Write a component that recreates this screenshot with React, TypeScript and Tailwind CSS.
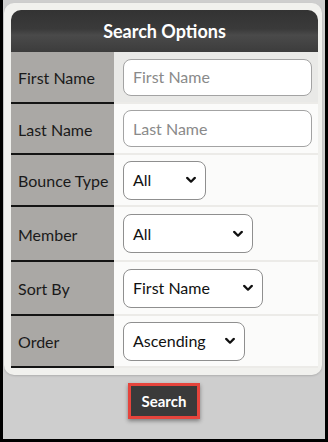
import React from "react";

const Chevron = () => (
  <svg
    className="pointer-events-none absolute right-[10px] top-1/2 -translate-y-1/2"
    width="10"
    height="7"
    viewBox="0 0 10 7"
  >
    <path d="M1.2 1.4 L5 5.2 L8.8 1.4" fill="none" stroke="#111" strokeWidth="2.2" strokeLinecap="round" strokeLinejoin="round" />
  </svg>
);

function Select({ value, width }: { value: string; width: number }) {
  return (
    <div className="relative" style={{ width }}>
      <div className="h-[39px] w-full rounded-[8px] border border-[#8f8f8f] bg-white pl-[9px] flex items-center text-[16px] text-[#111]">
        {value}
      </div>
      <Chevron />
    </div>
  );
}

function Input({ placeholder }: { placeholder: string }) {
  return (
    <div className="h-[37px] w-[189px] rounded-[8px] border border-[#a3a3a3] bg-white pl-[9px] flex items-center text-[16px] text-[#8a8a8a]">
      {placeholder}
    </div>
  );
}

function Row({
  label,
  h,
  children,
  shaded,
}: {
  label: string;
  h: number;
  children: React.ReactNode;
  shaded?: boolean;
}) {
  return (
    <div className="flex" style={{ height: h }}>
      <div className="w-[103px] bg-[#aaa8a5] border-b-2 border-[#141414] flex items-center pl-[7px] pt-[2px] text-[16px] text-[#1a1a1a]">
        {label}
      </div>
      <div
        className={
          "flex-1 flex items-center pl-[9px] border-b-2 border-[#ecebe8] " +
          (shaded ? "bg-[#e9e9e7]" : "bg-[#fbfbfa]")
        }
      >
        {children}
      </div>
    </div>
  );
}

export default function App() {
  return (
    <div
      className="w-[328px] h-[442px] bg-black px-[3px] pb-[3px]"
      style={{ fontFamily: "Lato, 'Open Sans', sans-serif" }}
    >
      <div className="h-full w-full bg-[#cecece] flex flex-col pt-[3px]">
        <div className="ml-[1px] mr-[3px] rounded-[10px] bg-[#f1f1ee] pl-[7px] pr-[4px] pt-[7px] pb-[7px] shadow-[0_1px_2px_rgba(0,0,0,0.15)]">
          <div className="h-[42px] rounded-t-[10px] bg-[linear-gradient(to_bottom,#333333_0%,#3a3a3a_45%,#4a4a4a_60%,#3c3c3c_100%)] flex items-center justify-center text-white font-bold text-[18px]">
            Search Options
          </div>
          <Row label="First Name" h={52} shaded>
            <Input placeholder="First Name" />
          </Row>
          <Row label="Last Name" h={51}>
            <Input placeholder="Last Name" />
          </Row>
          <Row label="Bounce Type" h={52}>
            <Select value="All" width={83} />
          </Row>
          <Row label="Member" h={55}>
            <Select value="All" width={130} />
          </Row>
          <Row label="Sort By" h={54}>
            <Select value="First Name" width={140} />
          </Row>
          <Row label="Order" h={52}>
            <Select value="Ascending" width={122} />
          </Row>
        </div>
        <div className="flex justify-center pt-[8px]">
          <div className="w-[72px] h-[36px] border-[3px] border-[#e5443c] bg-[#3a3a3a] text-white font-bold text-[15px] flex items-center justify-center shadow-[0_2px_4px_rgba(0,0,0,0.4)]">
            Search
          </div>
        </div>
      </div>
    </div>
  );
}
